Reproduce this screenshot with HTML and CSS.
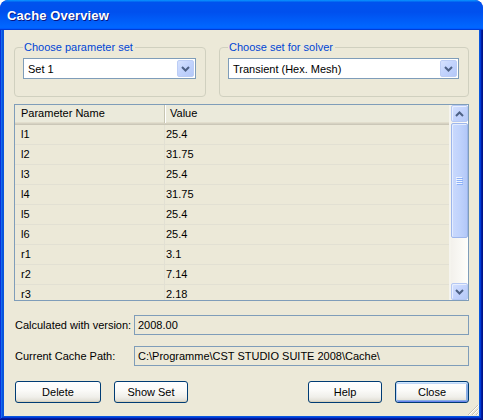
FILE: index.html
```html
<!DOCTYPE html>
<html>
<head>
<meta charset="utf-8">
<title>Cache Overview</title>
<link rel="stylesheet" href="styles.css">
</head>
<body>
<div class="window">
  <div class="titlebar"><span class="title">Cache Overview</span></div>
  <div class="frame">
    <div class="client">
      <div class="groups">
        <div class="group">
          <span class="legend">Choose parameter set</span>
          <div class="combo">
            <span class="combo-text">Set 1</span>
            <span class="drop"><svg width="9" height="6" viewBox="0 0 9 6"><polyline points="1,1 4.5,4.5 8,1" fill="none" stroke="#4D6185" stroke-width="2"/></svg></span>
          </div>
        </div>
        <div class="group">
          <span class="legend">Choose set for solver</span>
          <div class="combo">
            <span class="combo-text">Transient (Hex. Mesh)</span>
            <span class="drop"><svg width="9" height="6" viewBox="0 0 9 6"><polyline points="1,1 4.5,4.5 8,1" fill="none" stroke="#4D6185" stroke-width="2"/></svg></span>
          </div>
        </div>
      </div>

      <div class="list">
        <div class="table">
          <div class="row head"><div class="c1">Parameter Name</div><div class="c2">Value</div></div>
          <div class="row"><div class="c1">l1</div><div class="c2">25.4</div></div>
          <div class="row"><div class="c1">l2</div><div class="c2">31.75</div></div>
          <div class="row"><div class="c1">l3</div><div class="c2">25.4</div></div>
          <div class="row"><div class="c1">l4</div><div class="c2">31.75</div></div>
          <div class="row"><div class="c1">l5</div><div class="c2">25.4</div></div>
          <div class="row"><div class="c1">l6</div><div class="c2">25.4</div></div>
          <div class="row"><div class="c1">r1</div><div class="c2">3.1</div></div>
          <div class="row"><div class="c1">r2</div><div class="c2">7.14</div></div>
          <div class="row"><div class="c1">r3</div><div class="c2">2.18</div></div>
        </div>
        <div class="strip"></div>
        <div class="vscroll">
          <div class="sbtn"><svg width="9" height="6" viewBox="0 0 9 6"><polyline points="1,5 4.5,1.5 8,5" fill="none" stroke="#4D6185" stroke-width="2"/></svg></div>
          <div class="track">
            <div class="thumb">
              <svg width="7" height="8" viewBox="0 0 7 8">
                <rect x="0" y="0" width="6" height="1" fill="#EEF4FE"/>
                <rect x="1" y="1" width="6" height="1" fill="#8CB0F8"/>
                <rect x="0" y="2" width="6" height="1" fill="#EEF4FE"/>
                <rect x="1" y="3" width="6" height="1" fill="#8CB0F8"/>
                <rect x="0" y="4" width="6" height="1" fill="#EEF4FE"/>
                <rect x="1" y="5" width="6" height="1" fill="#8CB0F8"/>
                <rect x="0" y="6" width="6" height="1" fill="#EEF4FE"/>
                <rect x="1" y="7" width="6" height="1" fill="#8CB0F8"/>
              </svg>
            </div>
          </div>
          <div class="sbtn"><svg width="9" height="6" viewBox="0 0 9 6"><polyline points="1,1 4.5,4.5 8,1" fill="none" stroke="#4D6185" stroke-width="2"/></svg></div>
        </div>
      </div>

      <div class="field-row first">
        <span class="flabel">Calculated with version:</span>
        <div class="field">2008.00</div>
      </div>
      <div class="field-row second">
        <span class="flabel">Current Cache Path:</span>
        <div class="field">C:\Programme\CST STUDIO SUITE 2008\Cache\</div>
      </div>

      <div class="buttons">
        <button class="btn wide">Delete</button>
        <button class="btn">Show Set</button>
        <span class="spacer"></span>
        <button class="btn">Help</button>
        <button class="btn default">Close</button>
      </div>

      <svg class="grip" width="12" height="12" viewBox="0 0 12 12">
        <g stroke-width="1">
          <line x1="11" y1="1" x2="1" y2="11" stroke="#C4C1B3"/>
          <line x1="12" y1="1" x2="2" y2="11" stroke="#FFFFFF"/>
          <line x1="11" y1="5" x2="5" y2="11" stroke="#C4C1B3"/>
          <line x1="12" y1="5" x2="6" y2="11" stroke="#FFFFFF"/>
          <line x1="11" y1="9" x2="9" y2="11" stroke="#C4C1B3"/>
          <line x1="12" y1="9" x2="10" y2="11" stroke="#FFFFFF"/>
        </g>
      </svg>
    </div>
  </div>
</div>
</body>
</html>
```

FILE: styles.css
```css
* { box-sizing: border-box; }

html, body {
  margin: 0;
  padding: 0;
  background: #FFFFFF;
}

body {
  font-family: "Liberation Sans", Arial, sans-serif;
  font-size: 11px;
  color: #000000;
}

.window {
  width: 483px;
  height: 420px;
  display: flex;
  flex-direction: column;
  border-radius: 8px 8px 0 0;
  background: #0831D9;
  overflow: hidden;
}

.titlebar {
  height: 30px;
  flex: none;
  display: flex;
  align-items: center;
  padding: 0 0 0 7px;
  border-radius: 8px 8px 0 0;
  background: linear-gradient(180deg, #0997FF 0, #0053EE 8%, #0050EE 40%, #0066FF 88%, #0066FF 93%, #005BFF 95%, #003DD7 96%, #003DD7 100%);
}

.title {
  font-family: "Liberation Sans", Arial, sans-serif;
  font-weight: bold;
  font-size: 13px;
  color: #FFFFFF;
  text-shadow: 1px 1px #0A1883;
  letter-spacing: 0.1px;
}

.frame {
  flex: 1;
  display: flex;
  padding: 0 4px 4px 4px;
  background: #0855DD;
  box-shadow: inset -1px -1px #00138C, inset 1px 0 #0831D9, inset -2px -2px #001EA0, inset 2px 0 #166AEE, inset -3px -3px #003BDA, inset 3px 0 #0855DD;
}

.client {
  flex: 1;
  position: relative;
  display: flex;
  flex-direction: column;
  background: #ECE9D8;
  padding: 17px 10px 0 10px;
}

/* Group boxes */
.groups {
  display: grid;
  grid-template-columns: 192px 1fr;
  column-gap: 13px;
}

.group {
  position: relative;
  height: 50px;
  border: 1px solid #D0D0BF;
  border-radius: 4px;
  padding: 10px 9px 0 8px;
}

.legend {
  position: absolute;
  top: -7px;
  left: 8px;
  padding: 0 2px 0 1px;
  line-height: 13px;
  background: #ECE9D8;
  color: #0046D5;
}

.combo {
  height: 21px;
  display: flex;
  align-items: center;
  border: 1px solid #7F9DB9;
  background: #FFFFFF;
  padding: 1px;
}

.combo-text {
  flex: 1;
  padding-left: 3px;
}

.drop {
  width: 17px;
  height: 17px;
  display: flex;
  align-items: center;
  justify-content: center;
  border: 1px solid #BCCDF5;
  border-radius: 2px;
  background: linear-gradient(135deg, #D6E2FE 0%, #C3D4FD 45%, #B4C8F8 100%);
}

/* List */
.list {
  margin-top: 7px;
  height: 197px;
  display: flex;
  border: 1px solid #7F9DB9;
  background: #ECE9D8;
}

.table {
  width: 434px;
  flex: none;
  overflow: hidden;
}

.row {
  display: grid;
  grid-template-columns: 150px 1fr;
  height: 20px;
  line-height: 19px;
  border-bottom: 1px solid #E2E0D3;
}

.row .c1 {
  padding-left: 6px;
  border-right: 1px solid #E2E0D3;
}

.row .c2 {
  padding-left: 1px;
}

.row.head {
  height: 20px;
  line-height: 17px;
  background: #EBEADB;
  border-bottom: none;
  box-shadow: inset 0 -1px #CBC7B8, inset 0 -2px #D6D2C2, inset 0 -3px #E2DECD;
}

.row.head .c1 {
  padding-left: 6px;
  border-right: 1px solid #C7C5B2;
  box-shadow: 1px 0 #FFFFFF;
  margin: 0 0 2px 0;
}

.row.head .c2 {
  padding-left: 5px;
}

.strip {
  flex: 1;
  background: #F5F4EE;
}

.vscroll {
  width: 17px;
  flex: none;
  display: flex;
  flex-direction: column;
  background: linear-gradient(90deg, #F3F1EC 0%, #FEFEFB 100%);
}

.sbtn {
  height: 17px;
  flex: none;
  display: flex;
  align-items: center;
  justify-content: center;
  border: 1px solid #B5C8F3;
  border-radius: 2px;
  box-shadow: inset 1px 1px #E8EFFE;
  background: linear-gradient(135deg, #D4E1FE 0%, #C3D3FC 50%, #B6CAF8 100%);
}

.track {
  flex: 1;
  padding-top: 1px;
}

.thumb {
  height: 115px;
  display: flex;
  align-items: center;
  justify-content: center;
  border: 1px solid #9DB6EC;
  border-radius: 2px;
  box-shadow: inset 1px 1px #E3ECFE;
  background: linear-gradient(90deg, #CAD9FD 0%, #C0D3FC 50%, #B3C8F8 100%);
}

/* Fields */
.field-row {
  display: flex;
  align-items: center;
  height: 20px;
}

.field-row.first { margin-top: 14px; }
.field-row.second { margin-top: 11px; }

.flabel {
  width: 120px;
  flex: none;
  padding-left: 1px;
}

.field {
  flex: 1;
  height: 20px;
  line-height: 18px;
  border: 1px solid #7F9DB9;
  padding-left: 3px;
  white-space: nowrap;
}

/* Buttons */
.buttons {
  display: flex;
  margin-top: 15px;
  gap: 13px;
  padding-left: 1px;
}

.spacer { flex: 1; }

.btn {
  width: 74px;
  height: 22px;
  font-family: "Liberation Sans", Arial, sans-serif;
  font-size: 11px;
  color: #000000;
  border: 1px solid #003C74;
  border-radius: 3px;
  padding: 0;
  background: linear-gradient(180deg, #FFFFFF 0%, #FBFBF9 40%, #F0EFEA 75%, #E3E1D8 92%, #D6D0C5 100%);
  box-shadow: inset 0 -1px #D8D2BD;
}

.btn.wide { width: 86px; }

.btn.default {
  box-shadow: inset 0 1px #CEE7FF, inset 1px 0 #BCD4F6, inset -1px 0 #89ADE4, inset 0 -1px #6982EE, inset 0 2px #BCD4F6, inset -2px 0 #89ADE4, inset 0 -2px #89ADE4;
}

.grip {
  position: absolute;
  right: 0;
  bottom: 0;
}
```
